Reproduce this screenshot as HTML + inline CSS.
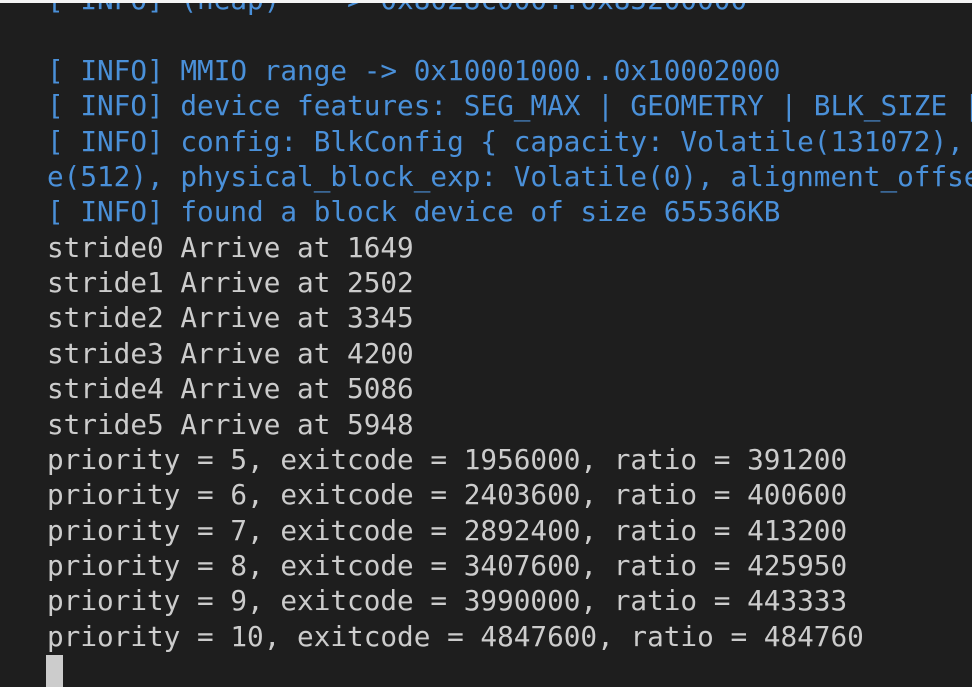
<!DOCTYPE html>
<html><head><style>
html,body{margin:0;padding:0;background:#1e1e1e;width:972px;height:687px;overflow:hidden}
.t{position:absolute;left:47px;top:-18px;font-family:"DejaVu Sans Mono","Liberation Mono",monospace;font-size:27.7px;line-height:35.375px;color:#cccccc;white-space:pre}
.b{color:#4a90d9}
.top{position:absolute;left:0;top:0;width:972px;height:3px;background:#f4f4f4}
.cur{position:absolute;left:46px;top:655px;width:17px;height:32px;background:#cccccc}
</style></head><body>
<div class="t"><span class="b">[ INFO] (heap) ---> 0x8028c000..0x85200000</span>

<span class="b">[ INFO] MMIO range -> 0x10001000..0x10002000</span>
<span class="b">[ INFO] device features: SEG_MAX | GEOMETRY | BLK_SIZE | </span>
<span class="b">[ INFO] config: BlkConfig { capacity: Volatile(131072), </span>
<span class="b">e(512), physical_block_exp: Volatile(0), alignment_offse</span>
<span class="b">[ INFO] found a block device of size 65536KB</span>
stride0 Arrive at 1649
stride1 Arrive at 2502
stride2 Arrive at 3345
stride3 Arrive at 4200
stride4 Arrive at 5086
stride5 Arrive at 5948
priority = 5, exitcode = 1956000, ratio = 391200
priority = 6, exitcode = 2403600, ratio = 400600
priority = 7, exitcode = 2892400, ratio = 413200
priority = 8, exitcode = 3407600, ratio = 425950
priority = 9, exitcode = 3990000, ratio = 443333
priority = 10, exitcode = 4847600, ratio = 484760</div>
<div class="top"></div>
<div class="cur"></div>
</body></html>
